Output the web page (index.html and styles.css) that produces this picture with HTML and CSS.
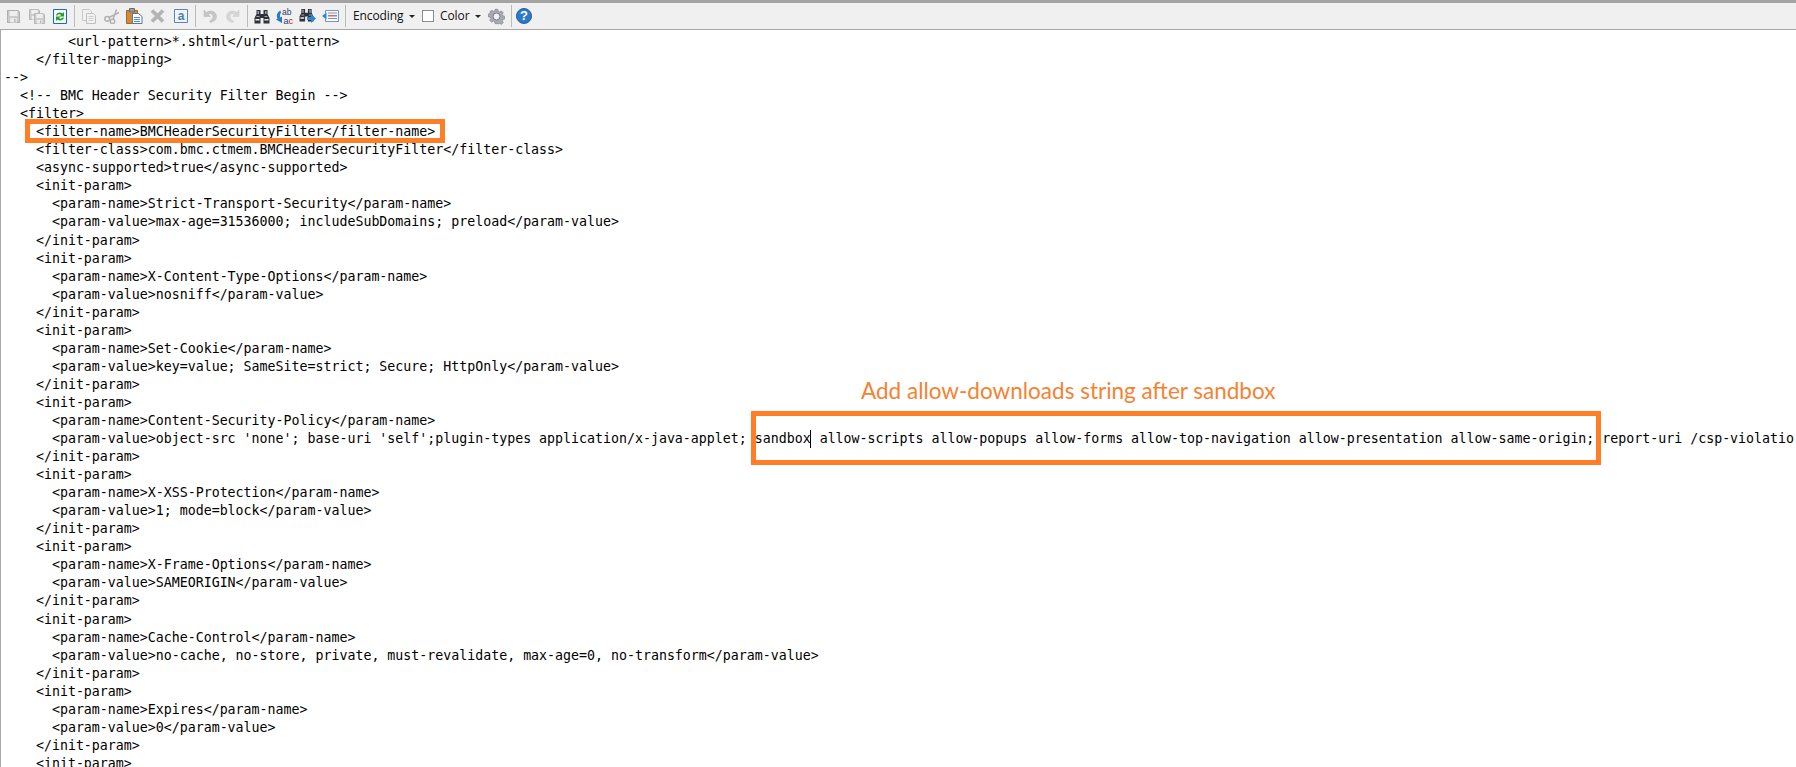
FILE: index.html
```html
<!DOCTYPE html>
<html lang="en">
<head>
<meta charset="utf-8">
<title>web.xml</title>
<link rel="stylesheet" href="styles.css">
</head>
<body>
<svg class="defs" width="0" height="0" aria-hidden="true">
  <symbol id="floppy" viewBox="0 0 12 12">
    <path d="M.5.5h9.500l1.500 1.500v9.500H.5z" fill="#cbcbcb" stroke="#b0b0b0"/>
    <path d="M2.500 1h7v4.500h-7z" fill="#efefef"/>
    <path d="M3 7.500h6V11.500H3z" fill="#ededed"/>
    <path d="M6.500 8h1.500v3H6.500z" fill="#bcbcbc"/>
  </symbol>
  <symbol id="bino" viewBox="0 0 16 15">
    <path d="M2.500 1h4v4h3V1h4v4l2 4v5.500H9.500V9h-3v5.500H.5V9l2-4z" fill="#2e323a"/>
    <path d="M1.500 10h4v1.500h-4zM10.500 10h4v1.500h-4z" fill="#e8ebef"/>
    <path d="M3.500 2h1.500v3H3.500zM11 2h1.500v3H11zM2.500 7h3v1h-3zM10.500 7h3v1h-3z" fill="#9ea4ae"/>
  </symbol>
</svg>
<div class="window">
  <div class="topline"></div>
  <div class="toolbar">
    <span class="tool"><svg width="13" height="13"><use href="#floppy" width="13" height="13"/></svg></span>
    <span class="tool"><svg width="16" height="15" viewBox="0 0 16 15"><use href="#floppy" width="11" height="11" x="0" y="0"/><use href="#floppy" width="11" height="11" x="5" y="4"/></svg></span>
    <span class="tool"><svg width="14" height="15" viewBox="0 0 14 15"><path d="M.5.5h13v14H.5z" fill="#f6fbff" stroke="#1f6aa8"/><path d="M3 6.500C3.500 3.500 7.500 2.500 9.500 4.500L11 3v4.500H6.500L8 6C7 5 5 5.200 4.500 6.500z" fill="#23a02b"/><path d="M11 8.500c-.5 3-4.500 4-6.500 2L3 12V7.500h4.500L6 9c1 1 3 .8 3.500-.5z" fill="#23a02b"/></svg></span>
    <span class="sep"></span>
    <span class="tool"><svg width="14" height="15" viewBox="0 0 14 15"><path d="M.5.5h7l2 2v9H.5z" fill="#f1f1f1" stroke="#c8c8c8"/><path d="M4.500 4.500h7l2 2v8h-9z" fill="#f1f1f1" stroke="#c0c0c0"/><path d="M6.500 7.500h5M6.500 9.500h5M6.500 11.500h5" stroke="#cfcfcf"/></svg></span>
    <span class="tool"><svg width="16" height="15" viewBox="0 0 16 15" fill="none" stroke="#b2b2b2" stroke-width="1.500"><path d="M5 8.500 15 3.500M9 10.500 12.500 .5"/><circle cx="3.200" cy="9.800" r="2.400"/><circle cx="8.500" cy="12.400" r="2.200"/></svg></span>
    <span class="tool"><svg width="17" height="16" viewBox="0 0 17 16"><path d="M.5 2.500h11v13H.5z" fill="#d08a3c" stroke="#a0662a"/><path d="M3.500.5h5v3.500h-5z" fill="#9a9a9a" stroke="#6e6e6e"/><path d="M6.500 5.500h6l3.500 3v7H6.500z" fill="#fff" stroke="#4e79a8"/><path d="M8 9.500h6M8 11.500h6M8 13.500h6" stroke="#5a8ac0"/></svg></span>
    <span class="tool"><svg width="15" height="14" viewBox="0 0 15 14"><path d="M2 1.500 13 12.500M13 1.500 2 12.500" stroke="#b4b4b4" stroke-width="3.800"/></svg></span>
    <span class="tool"><svg width="14" height="14" viewBox="0 0 14 14"><path d="M.5.500h13v13H.5z" fill="#eef4fa" stroke="#5d85ae"/><text x="7" y="11" class="glyph-a">a</text></svg></span>
    <span class="sep"></span>
    <span class="tool"><svg width="14" height="14" viewBox="0 0 14 14"><path d="M1 1v6.500h6.500L5.200 5.200c2-1.300 4.800-.3 4.800 2.300 0 2-1.500 3.500-3.500 4.500l1 1.500C11.500 12.500 13.500 10.500 13.500 7.500 13.500 2.500 7.500.5 3.500 3.500z" fill="#c6c6c6" stroke="#b8b8b8" stroke-width=".5"/></svg></span>
    <span class="tool"><svg width="14" height="14" viewBox="0 0 14 14"><path d="M13 1v6.500H6.500l2.300-2.300C6.800 3.900 4 4.900 4 7.500c0 2 1.500 3.500 3.500 4.500l-1 1.500C2.500 12.500.5 10.500.5 7.500.5 2.500 6.500.5 10.500 3.500z" fill="#d6d6d6" stroke="#cacaca" stroke-width=".5"/></svg></span>
    <span class="sep"></span>
    <span class="tool"><svg width="16" height="15"><use href="#bino" width="16" height="15"/></svg></span>
    <span class="tool"><svg width="17" height="16" viewBox="0 0 17 16"><text x="6" y="7" class="glyph-ab">ab</text><text x="7.500" y="15.500" class="glyph-ac">a<tspan class="glyph-red">c</tspan></text><path d="M4.500 2.500C1 4 .2 7.500 1.500 10.500L0 11.500l6 3.500V8.500L4.300 9.500C3.600 7.500 4 6 5 5z" fill="#2a78c8"/></svg></span>
    <span class="tool"><svg width="17" height="16" viewBox="0 0 17 16"><use href="#bino" width="15" height="14" x="0" y="0"/><path d="M8 9h4V6l5 4.500L12 15v-3H8z" fill="#2f86d8"/></svg></span>
    <span class="tool"><svg width="17" height="14" viewBox="0 0 17 14"><path d="M3.500 1.500h13v11h-13z" fill="#f5f8fc" stroke="#7695b8"/><path d="M6 4h9M6 9.500h9" stroke="#7695b8"/><path d="M6 6.800h9" stroke="#c8484a" stroke-width="1.200"/><path d="M0 7l4.500-3.500v7z" fill="#2f86d8"/></svg></span>
    <span class="sep"></span>
    <span class="label encoding">Encoding</span>
    <span class="caret-down"></span>
    <span class="checkbox"></span>
    <span class="label color">Color</span>
    <span class="caret-down"></span>
    <span class="tool gear"><svg width="17" height="17" viewBox="0 0 17 17"><path d="M7 .8h3l.4 2.100 1.500.7 1.800-1.200 2.100 2.100-1.200 1.800.7 1.500 2 .4v3l-2 .4-.7 1.500 1.200 1.800-2.100 2.100-1.800-1.200-1.500.7L10 16.200H7l-.4-2.100-1.500-.7-1.800 1.200-2.100-2.100 1.200-1.800-.7-1.500-2-.4v-3l2-.4.7-1.500L1.200 3.800 3.300 1.700l1.800 1.200 1.500-.7z" transform="translate(.6 .6) scale(.93)" fill="#a8abb0" stroke="#7b7f86" stroke-width=".7"/><circle cx="8.500" cy="8.500" r="3.500" fill="#eef0f2" stroke="#777b82"/></svg></span>
    <span class="sep sep-last"></span>
    <span class="help">?</span>
  </div>
  <div class="editor">
<pre class="code">        &lt;url-pattern&gt;*.shtml&lt;/url-pattern&gt;
    &lt;/filter-mapping&gt;
--&gt;
  &lt;!-- BMC Header Security Filter Begin --&gt;
  &lt;filter&gt;
    &lt;filter-name&gt;BMCHeaderSecurityFilter&lt;/filter-name&gt;
    &lt;filter-class&gt;com.bmc.ctmem.BMCHeaderSecurityFilter&lt;/filter-class&gt;
    &lt;async-supported&gt;true&lt;/async-supported&gt;
    &lt;init-param&gt;
      &lt;param-name&gt;Strict-Transport-Security&lt;/param-name&gt;
      &lt;param-value&gt;max-age=31536000; includeSubDomains; preload&lt;/param-value&gt;
    &lt;/init-param&gt;
    &lt;init-param&gt;
      &lt;param-name&gt;X-Content-Type-Options&lt;/param-name&gt;
      &lt;param-value&gt;nosniff&lt;/param-value&gt;
    &lt;/init-param&gt;
    &lt;init-param&gt;
      &lt;param-name&gt;Set-Cookie&lt;/param-name&gt;
      &lt;param-value&gt;key=value; SameSite=strict; Secure; HttpOnly&lt;/param-value&gt;
    &lt;/init-param&gt;
    &lt;init-param&gt;
      &lt;param-name&gt;Content-Security-Policy&lt;/param-name&gt;
      &lt;param-value&gt;object-src 'none'; base-uri 'self';plugin-types application/x-java-applet; sandbox<span class="text-caret"></span> allow-scripts allow-popups allow-forms allow-top-navigation allow-presentation allow-same-origin; report-uri /csp-violatio
    &lt;/init-param&gt;
    &lt;init-param&gt;
      &lt;param-name&gt;X-XSS-Protection&lt;/param-name&gt;
      &lt;param-value&gt;1; mode=block&lt;/param-value&gt;
    &lt;/init-param&gt;
    &lt;init-param&gt;
      &lt;param-name&gt;X-Frame-Options&lt;/param-name&gt;
      &lt;param-value&gt;SAMEORIGIN&lt;/param-value&gt;
    &lt;/init-param&gt;
    &lt;init-param&gt;
      &lt;param-name&gt;Cache-Control&lt;/param-name&gt;
      &lt;param-value&gt;no-cache, no-store, private, must-revalidate, max-age=0, no-transform&lt;/param-value&gt;
    &lt;/init-param&gt;
    &lt;init-param&gt;
      &lt;param-name&gt;Expires&lt;/param-name&gt;
      &lt;param-value&gt;0&lt;/param-value&gt;
    &lt;/init-param&gt;
    &lt;init-param&gt;</pre>
    <div class="mark mark-name"></div>
    <div class="mark mark-sandbox"></div>
    <div class="note">Add allow-downloads string after sandbox</div>
  </div>
</div>
</body>
</html>
```

FILE: styles.css
```css
* { box-sizing: border-box; }
html, body { margin: 0; padding: 0; height: 100%; overflow: hidden; background: #fff; }
.defs { position: absolute; }
.window { height: 767px; display: flex; flex-direction: column; }
.topline { height: 3px; background: #a3a3a3; flex: none; }
.toolbar {
  flex: none; height: 27px; display: flex; align-items: center;
  padding-left: 2px; background: #f0f0f0; border-bottom: 1px solid #a8a8a8;
  font-family: "Open Sans", "Noto Sans", sans-serif; font-size: 12px; color: #111;
}
.tool { width: 23px; height: 22px; display: flex; align-items: center; justify-content: center; flex: none; }
.sep { width: 1px; height: 22px; background: #bcbcbc; margin: 0 2px 0 3px; flex: none; }
.label { line-height: 22px; flex: none; }
.encoding { margin-left: 5px; width: 50px; letter-spacing: -.1px; }
.caret-down { width: 0; height: 0; border: 3px solid transparent; border-top: 3px solid #222; border-bottom: 0; margin-left: 6px; flex: none; }
.checkbox { width: 12px; height: 12px; background: #fff; border: 1px solid #8e8e8e; margin-left: 7px; flex: none; }
.color { margin-left: 6px; width: 29px; letter-spacing: -.1px; }
.gear { margin-left: 3px; width: 24px; }
.sep-last { margin: 0 4px 0 3px; }
.help {
  width: 16px; height: 16px; border-radius: 50%; flex: none;
  background: #2f78c8; border: 1px solid #1e5fa8; color: #fff;
  font: bold 13px/14px "Liberation Sans", sans-serif; text-align: center;
}
.glyph-a { font: bold 12px "Liberation Sans", sans-serif; fill: #4f7dab; text-anchor: middle; }
.glyph-ab { font: 8.5px "Liberation Sans", sans-serif; fill: #1f3f70; }
.glyph-ac { font: 9px "Liberation Sans", sans-serif; fill: #1f3f70; }
.glyph-red { fill: #c0161c; }
.editor { position: relative; flex: 1; overflow: hidden; border-left: 1px solid #a8a8a8; background: #fff; }
.code {
  margin: 0; padding: 3px 0 0 3px; white-space: pre;
  font-family: "DejaVu Sans Mono", monospace; font-size: 13.27px; line-height: 18.04px; color: #000;
}
.text-caret { display: inline-block; width: 0; height: 18px; vertical-align: top; border-left: 1px solid #000; margin-left: -1px; margin-right: 1px; }
.mark { position: absolute; border: 5px solid #ff7f27; pointer-events: none; }
.mark-name { left: 24px; top: 89px; width: 420px; height: 24px; }
.mark-sandbox { left: 750px; top: 381px; width: 850px; height: 54px; }
.note {
  position: absolute; left: 860px; top: 346px; white-space: nowrap;
  font-family: Lato, "Open Sans", sans-serif; font-size: 22.5px; line-height: 30px; color: #f58233;
}
```
